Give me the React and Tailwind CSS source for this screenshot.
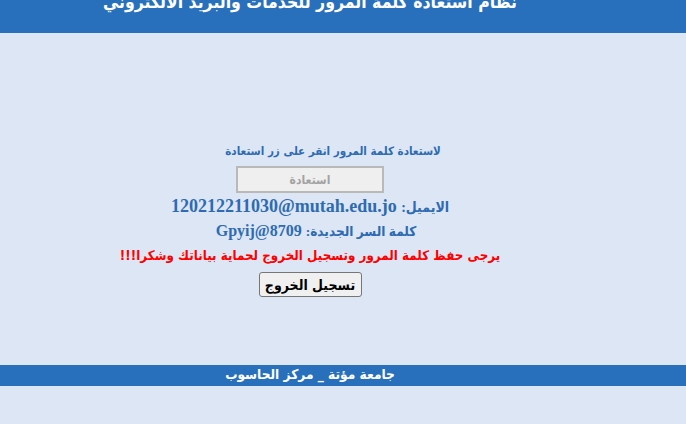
const AR = '"DejaVu Sans Condensed", "DejaVu Sans", sans-serif';
const SERIF = '"Liberation Serif", "DejaVu Sans Condensed", "DejaVu Sans", serif';

export default function App() {
  return (
    <div
      dir="rtl"
      className="min-h-[424px] w-[686px] bg-[#dce6f4] overflow-hidden"
      style={{ fontFamily: AR }}
    >
      {/* Top banner */}
      <div className="h-[33px] bg-[#2870bc] overflow-hidden">
        <div className="w-[620px] ml-auto mr-[66px] -mt-[11px] text-center text-[17.5px] font-bold text-white leading-[26px] whitespace-nowrap">
          نظام استعادة كلمة المرور للخدمات والبريد الالكتروني
        </div>
      </div>

      {/* Main */}
      <div className="w-[620px] ml-auto mr-[66px] pt-[108px] h-[332px] flex flex-col items-center text-center font-bold">
        <p className="text-[11.5px] text-[#2e6bb2] leading-[20px] pl-[46px] whitespace-nowrap">
          لاستعادة كلمة المرور انقر على زر استعادة
        </p>
        <button
          disabled
          className="mt-[5px] w-[148px] h-[27px] bg-[#efefef] border-2 border-[#b9b9b9] text-[12px] text-[#a3a3a3] font-bold"
        >
          استعادة
        </button>
        <p
          className="mt-[2px] text-[18px] text-[#2e6bb2] leading-[22px] whitespace-nowrap"
          style={{ fontFamily: SERIF }}
        >
          <span className="text-[14px]">الايميل:</span> <bdi dir="ltr">120212211030@mutah.edu.jo</bdi>
        </p>
        <p
          className="mt-[1px] text-[16px] text-[#2e6bb2] leading-[22px] pl-[12px] whitespace-nowrap"
          style={{ fontFamily: SERIF }}
        >
          <span className="text-[13.5px]">كلمة السر الجديدة:</span> <bdi dir="ltr">Gpyij@8709</bdi>
        </p>
        <p className="mt-[3px] text-[13.3px] text-[#ff0000] leading-[20px] whitespace-nowrap">
          يرجى حفظ كلمة المرور وتسجيل الخروج لحماية بياناتك وشكرا!!!
        </p>
        <button className="mt-[6px] w-[103px] h-[25px] bg-[#f0f0f0] border border-[#767676] rounded-[3px] text-[14px] text-black font-bold leading-none whitespace-nowrap">
          تسجيل الخروج
        </button>
      </div>

      {/* Footer */}
      <div className="h-[21px] bg-[#2870bc]">
        <div className="w-[620px] ml-auto mr-[66px] text-center text-[13.6px] font-bold text-white leading-[19px] whitespace-nowrap">
          جامعة مؤتة _ مركز الحاسوب
        </div>
      </div>
    </div>
  );
}
